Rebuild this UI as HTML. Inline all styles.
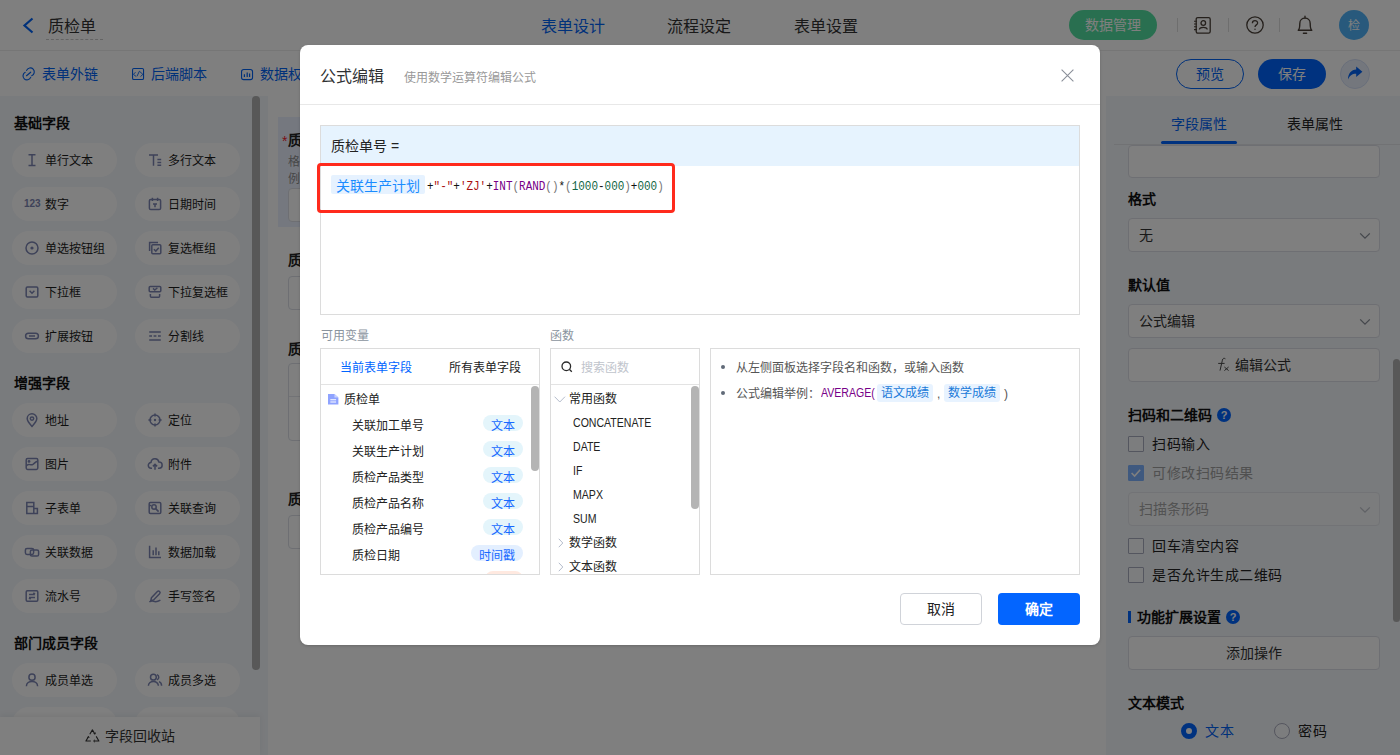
<!DOCTYPE html>
<html lang="zh-CN">
<head>
<meta charset="utf-8">
<title>质检单</title>
<style>
*{box-sizing:border-box;margin:0;padding:0}
html,body{width:1400px;height:755px;overflow:hidden;background:#fff}
body{font-family:"Liberation Sans",sans-serif;font-size:14px;color:#222;position:relative}
.abs{position:absolute}
.t{position:absolute;white-space:nowrap;line-height:20px;height:20px}
svg{display:block;overflow:visible}
/* ---------- header ---------- */
#hdr{position:absolute;left:0;top:0;width:1400px;height:51px;background:#fff;border-bottom:1px solid #ececec}
#bar2{position:absolute;left:0;top:51px;width:1400px;height:45px;background:#fff}
.blue{color:#0062f5}
/* ---------- left panel ---------- */
#left{position:absolute;left:0;top:96px;width:268px;height:659px;background:#f3f6fa;overflow:hidden}
.gh{position:absolute;left:14px;font-weight:bold;font-size:14px;line-height:20px;color:#111;white-space:nowrap}
.pill{position:absolute;width:105px;height:34px;border-radius:17px;background:#fff;font-size:12px;line-height:34px;color:#1c1c1c;white-space:nowrap}
.pill.c1{left:12px}.pill.c2{left:135px}
.pill span{position:absolute;left:33px;top:1px}
.pill svg{position:absolute;left:12px;top:9px;width:16px;height:16px;stroke:#7c85b2;fill:none;stroke-width:1.5}
#recycle{position:absolute;left:0;top:621px;width:260px;height:38px;background:#fff;box-shadow:0 -2px 6px rgba(0,0,0,.06)}
/* ---------- canvas ---------- */
#canvas{position:absolute;left:268px;top:96px;width:838px;height:659px;background:#fff;overflow:hidden}
.flabel{position:absolute;left:20px;font-weight:bold;font-size:14px;line-height:20px;color:#222;white-space:nowrap}
.finput{position:absolute;left:20px;width:790px;height:34px;border:1px solid #dcdfe6;border-radius:4px;background:#fff}
/* ---------- right panel ---------- */
#right{position:absolute;left:1106px;top:96px;width:294px;height:659px;background:#f3f6fa;overflow:hidden}
.rl{position:absolute;left:22px;font-weight:bold;font-size:14px;line-height:20px;color:#111;white-space:nowrap}
.rbox{position:absolute;left:22px;width:252px;height:34px;border:1px solid #dcdfe6;border-radius:4px;background:#fff;font-size:14px;line-height:32px;color:#333;white-space:nowrap}
.cb{position:absolute;left:22px;width:16px;height:16px;border:1px solid #a9acbe;border-radius:1px;background:#f9fafc}
.cbt{position:absolute;left:46px;font-size:14px;line-height:20px;color:#222;white-space:nowrap;letter-spacing:.5px}
/* ---------- overlay + modal ---------- */
#mask{position:absolute;left:0;top:0;width:1400px;height:755px;background:rgba(0,0,0,.5);z-index:10}
#modal{z-index:11;position:absolute;left:300px;top:45px;width:800px;height:600px;background:#fff;border-radius:8px;box-shadow:0 1px 3px rgba(0,0,0,.18);overflow:hidden}
#modal .t12{font-size:12px}
.box{position:absolute;border:1px solid #dcdcdc;background:#fff;overflow:hidden}
.row{position:absolute;left:0;margin-top:1px;font-size:12px;line-height:20px;height:20px;color:#222;white-space:nowrap}
.tag{position:absolute;height:16px;border-radius:8px;font-size:12px;line-height:22px;text-align:center;color:#155cff;background:#e8f6f6;white-space:nowrap}
.mono{font-family:"Liberation Mono",monospace;font-size:13px;color:#111;transform:scaleX(.8425);transform-origin:0 50%}
.mono i{font-style:normal}.mono .s{color:#aa1111}.mono .k{color:#770088}.mono .n{color:#116644}.mono .p{color:#777}
.lat{margin-top:0;transform:scaleX(.88);transform-origin:0 50%}
</style>
</head>
<body>

<!-- ================= HEADER ================= -->
<div id="hdr">
  <svg class="abs" style="left:22px;top:17px" width="12" height="17" viewBox="0 0 12 17"><path d="M10.5 1.5 L2.5 8.5 L10.5 15.5" fill="none" stroke="#0062f5" stroke-width="2.2" stroke-linejoin="miter"/></svg>
  <div class="t" style="left:48px;top:16.5px;font-size:16px;color:#333">质检单</div>
  <div class="abs" style="left:46px;top:39px;width:57px;height:0;border-top:1px dashed #c9c9c9"></div>

  <div class="t blue" style="left:541px;top:16.5px;font-size:16px">表单设计</div>
  <div class="t" style="left:667px;top:16.5px;font-size:16px;color:#333">流程设定</div>
  <div class="t" style="left:794px;top:16.5px;font-size:16px;color:#333">表单设置</div>

  <div class="abs" style="left:1069px;top:10px;width:88px;height:30px;border-radius:15px;background:#53dfa0;color:#fff;font-size:14px;line-height:30px;text-align:center;white-space:nowrap">数据管理</div>
  <div class="abs" style="left:1177px;top:18px;width:1px;height:14px;background:#dcdcdc"></div>
  <div class="abs" style="left:1228px;top:18px;width:1px;height:14px;background:#dcdcdc"></div>
  <div class="abs" style="left:1279px;top:18px;width:1px;height:14px;background:#dcdcdc"></div>
  <!-- contacts icon -->
  <svg class="abs" style="left:1193px;top:16px" width="19" height="19" viewBox="0 0 19 19" fill="none" stroke="#4a4038" stroke-width="1.3">
    <rect x="3.2" y="1.6" width="14" height="15.6" rx="1.6"/>
    <circle cx="10.3" cy="7" r="2.3"/>
    <path d="M6.4 13.6 C6.4 10.6 14.2 10.6 14.2 13.6"/>
    <path d="M1 5.2h3M1 8h3M1 10.8h3M1 13.6h3" stroke-width="1.1"/>
  </svg>
  <!-- help icon -->
  <svg class="abs" style="left:1246px;top:16px" width="18" height="18" viewBox="0 0 18 18" fill="none" stroke="#4a4038" stroke-width="1.3">
    <circle cx="9" cy="9" r="8.2"/>
    <path d="M6.4 7.2 C6.4 3.9 11.6 3.9 11.6 7 C11.6 9 9 8.8 9 11" />
    <circle cx="9" cy="13.3" r=".7" fill="#4a4038" stroke="none"/>
  </svg>
  <!-- bell icon -->
  <svg class="abs" style="left:1297px;top:15px" width="16" height="20" viewBox="0 0 16 20" fill="none" stroke="#4a4038" stroke-width="1.4">
    <path d="M1.2 15.2 H14.8 C13.2 14 13.2 12.6 13.2 8.4 C13.2 1.4 2.8 1.4 2.8 8.4 C2.8 12.6 2.8 14 1.2 15.2 Z" stroke-linejoin="round"/>
    <path d="M8 1.2v1.6M6.4 18.2h3.2" stroke-linecap="round"/>
  </svg>
  <div class="abs" style="left:1339px;top:10px;width:30px;height:30px;border-radius:15px;background:#50b3f8;color:#fff;font-size:12px;line-height:32px;text-align:center">检</div>
</div>

<!-- ================= TOOLBAR ================= -->
<div id="bar2">
  <svg class="abs" style="left:22px;top:16px" width="14" height="14" viewBox="0 0 14 14" fill="none" stroke="#0062f5" stroke-width="1.15" stroke-linecap="round">
    <path d="M4.600 3.400A4 4 0 1 1 9.700 8.700"/>
    <path d="M8.700 10.400A4 4 0 1 1 3.200 5.300"/>
    <path d="M4.500 8.700L8.700 5.200"/>
  </svg>
  <div class="t blue" style="left:42px;top:13px">表单外链</div>
  <svg class="abs" style="left:132px;top:17px" width="12.100" height="12.100" viewBox="0 0 12.100 12.100" fill="none" stroke="#0062f5" stroke-width="1.1" stroke-linejoin="round">
    <rect x=".55" y=".55" width="11" height="11" rx="1.3"/>
    <path d="M3.500 4.200L1.400 6.400L4.200 8.500M5 8.300L7.400 3.200L10.900 6.400L8.500 8.600" stroke-width=".9"/>
  </svg>
  <div class="t blue" style="left:151px;top:13px">后端脚本</div>
  <svg class="abs" style="left:241px;top:17.800px" width="12.100" height="11.200" viewBox="0 0 12.100 11.200" fill="none" stroke="#0062f5" stroke-width="1.1">
    <rect x=".55" y=".55" width="11" height="10.100" rx="2.200"/>
    <path d="M3.400 8V5.300M6.200 8V3.400M8.600 8V4.600" stroke-width="1.200"/>
  </svg>
  <div class="t blue" style="left:260px;top:13px">数据权限</div>

  <div class="abs blue" style="left:1176px;top:8px;width:68px;height:30px;border:1px solid #0062f5;border-radius:15px;font-size:14px;line-height:28px;text-align:center;white-space:nowrap">预览</div>
  <div class="abs" style="left:1258px;top:8px;width:68px;height:30px;border-radius:15px;background:#0065ff;color:#fff;font-size:14px;line-height:30px;text-align:center;white-space:nowrap">保存</div>
  <div class="abs" style="left:1340px;top:8px;width:30px;height:30px;border-radius:15px;background:#e9effb;border:1px solid #d3def5"></div>
  <svg class="abs" style="left:1347px;top:15px" width="16" height="15" viewBox="0 0 16 15"><path d="M9.2 0.6 L15.4 5.8 L9.2 11 V7.8 C5 7.8 2.6 9.6 1 13.6 C1 7.6 4.4 3.8 9.2 3.6 Z" fill="#0062f5"/></svg>
</div>

<!-- LEFT-PANEL -->
<div id="left">
  <div class="gh" style="top:17px">基础字段</div>
  <div class="pill c1" style="top:47px"><svg viewBox="0 0 16 16"><path d="M4.5 2.8h7M8 2.8v10.8M4.5 13.6h7"/></svg><span>单行文本</span></div>
  <div class="pill c2" style="top:47px"><svg viewBox="0 0 16 16"><path d="M2 3h9M6.5 3v10.8M10.4 7.6h3.8M10.4 10.4h3.8M10.4 13.2h3.8"/></svg><span>多行文本</span></div>
  <div class="pill c1" style="top:91px"><svg viewBox="0 0 16 16"><text x="0" y="11.300" font-family="Liberation Sans,sans-serif" font-size="10" font-weight="bold" stroke="none" fill="#7c85b2">123</text></svg><span>数字</span></div>
  <div class="pill c2" style="top:91px"><svg viewBox="0 0 16 16"><rect x="2.4" y="3.4" width="11.2" height="10.2" rx="1.4"/><path d="M5.4 1.8v3.2M10.6 1.8v3.2M6 8h4M8 8v3.2"/></svg><span>日期时间</span></div>
  <div class="pill c1" style="top:135px"><svg viewBox="0 0 16 16"><circle cx="8" cy="8" r="6"/><circle cx="8" cy="8" r="1.6" fill="#7c85b2" stroke="none"/></svg><span>单选按钮组</span></div>
  <div class="pill c2" style="top:135px"><svg viewBox="0 0 16 16"><path d="M2.6 11V2.6H11"/><rect x="4.8" y="4.8" width="9" height="9" rx="1"/><path d="M6.9 9.2l1.9 1.9 3-3.4"/></svg><span>复选框组</span></div>
  <div class="pill c1" style="top:179px"><svg viewBox="0 0 16 16"><rect x="2.2" y="3" width="11.6" height="10" rx="1.2"/><path d="M5.6 6.8l2.4 2.4 2.4-2.4"/></svg><span>下拉框</span></div>
  <div class="pill c2" style="top:179px"><svg viewBox="0 0 16 16"><rect x="2.2" y="2.6" width="11.6" height="5.2" rx="1"/><path d="M6 4.4l1.8 1.6 2.6-2.2"/><path d="M3.4 10v2.2a1 1 0 0 0 1 1h7.2a1 1 0 0 0 1-1V10"/></svg><span>下拉复选框</span></div>
  <div class="pill c1" style="top:223px"><svg viewBox="0 0 16 16"><rect x="1.6" y="5.2" width="12.8" height="5.6" rx="2.8"/><path d="M5 8h6"/></svg><span>扩展按钮</span></div>
  <div class="pill c2" style="top:223px"><svg viewBox="0 0 16 16"><path d="M2.2 4h11.6M2.2 8h2.8M6.6 8h2.8M11 8h2.8M2.2 12h11.6"/></svg><span>分割线</span></div>
  <div class="gh" style="top:277px">增强字段</div>
  <div class="pill c1" style="top:307px"><svg viewBox="0 0 16 16"><path d="M8 14.4C4.6 10.9 3.2 8.8 3.2 6.6a4.8 4.8 0 0 1 9.6 0c0 2.2-1.4 4.3-4.8 7.8z"/><circle cx="8" cy="6.6" r="1.7"/></svg><span>地址</span></div>
  <div class="pill c2" style="top:307px"><svg viewBox="0 0 16 16"><circle cx="8" cy="8" r="5"/><circle cx="8" cy="8" r="1.2" fill="#7c85b2" stroke="none"/><path d="M8 1.4v3M8 11.6v3M1.4 8h3M11.6 8h3"/></svg><span>定位</span></div>
  <div class="pill c1" style="top:351px"><svg viewBox="0 0 16 16"><rect x="2.2" y="2.6" width="11.6" height="10.8" rx="1.4"/><path d="M2.4 9.800C4.600 6.600 6.400 9.800 8.600 8.600S11.400 5.400 13.600 5.200"/><circle cx="5" cy="5.400" r=".7" fill="#7c85b2"/></svg><span>图片</span></div>
  <div class="pill c2" style="top:351px"><svg viewBox="0 0 16 16"><path d="M5 12.2H4.4a2.9 2.9 0 0 1-.4-5.8a4 4 0 0 1 7.9-.4a3.1 3.1 0 0 1 .3 6.2H11"/><path d="M8 13.8V8.4M5.9 10.4L8 8.3l2.1 2.1"/></svg><span>附件</span></div>
  <div class="pill c1" style="top:395px"><svg viewBox="0 0 16 16"><path d="M2.8 2.4h7v11.2h-7zM2.8 6.4h7M9.8 8.6h3.6v5H9.8"/></svg><span>子表单</span></div>
  <div class="pill c2" style="top:395px"><svg viewBox="0 0 16 16"><rect x="2.2" y="2.6" width="11.6" height="10.8" rx="1.2"/><circle cx="7" cy="7" r="2.2"/><path d="M8.6 8.6l3 3M2.2 5.6h2.2"/></svg><span>关联查询</span></div>
  <div class="pill c1" style="top:439px"><svg viewBox="0 0 16 16"><rect x="1.4" y="4.4" width="8.2" height="6" rx="1.6"/><rect x="6.4" y="6" width="8.2" height="6" rx="1.6"/></svg><span>关联数据</span></div>
  <div class="pill c2" style="top:439px"><svg viewBox="0 0 16 16"><path d="M2.6 1.8v11.8h11.4M6.2 11.2V6.2M9 11.2V3.6M11.8 11.2V7.2"/></svg><span>数据加载</span></div>
  <div class="pill c1" style="top:483px"><svg viewBox="0 0 16 16"><rect x="2.2" y="2.8" width="11.6" height="10.4" rx="1.2"/><path d="M5 6.4h6M5 9.6h6M9.4 4.8l1.6 1.6M6.6 11.2L5 9.6"/></svg><span>流水号</span></div>
  <div class="pill c2" style="top:483px"><svg viewBox="0 0 16 16"><path d="M4.4 9.8l6-6.2a1.5 1.5 0 0 1 2.2 2.1l-6 6.2-2.8.8z"/><path d="M2.4 14c2.2-1.8 3.8-.6 5.4-.4s3.400-.2 5.6-1.400"/></svg><span>手写签名</span></div>
  <div class="gh" style="top:537px">部门成员字段</div>
  <div class="pill c1" style="top:567px"><svg viewBox="0 0 16 16"><circle cx="8" cy="5.2" r="3.1"/><path d="M2.4 14.2c0-6.4 11.2-6.4 11.2 0"/></svg><span>成员单选</span></div>
  <div class="pill c2" style="top:567px"><svg viewBox="0 0 16 16"><circle cx="6.4" cy="5.2" r="2.9"/><path d="M1.4 13.8c0-5.8 10-5.8 10 0"/><path d="M10 2.6a2.8 2.8 0 0 1 0 5.2M12 9.6c1.6.6 2.6 2 2.6 4.2"/></svg><span>成员多选</span></div>
  <div class="pill c1" style="top:611px"><svg viewBox="0 0 16 16"><rect x="2.4" y="2.6" width="11.2" height="10.8" rx="1"/></svg><span>部门单选</span></div>
  <div class="pill c2" style="top:611px"><svg viewBox="0 0 16 16"><rect x="2.4" y="2.6" width="11.2" height="10.8" rx="1"/></svg><span>部门多选</span></div>
  <div class="abs" style="left:252px;top:0;width:8px;height:574px;border-radius:4px;background:#b0b0b0"></div>
  <div id="recycle">
    <svg class="abs" style="left:84.500px;top:11.500px" width="15" height="14" viewBox="0 0 15 14" fill="none" stroke="#333" stroke-width="1.1" stroke-linejoin="round"><path d="M4.800 5.200L7.400 .9l2.500 4.100M11.200 7.400l2.700 4.600H8.800M5.800 12H.9l2.600-4.400"/><path d="M8.600 4.400l1.500.8.300-1.700M9.900 10.800l-1.300 1.200 1.300 1.200M2.300 8.500l1.300-1.100.5 1.600" stroke-width=".9"/></svg>
    <div class="t" style="left:105px;top:9px;font-size:14px;color:#333">字段回收站</div>
  </div>
</div>
<!-- /LEFT-PANEL -->
<!-- CANVAS -->
<div id="canvas">
  <div class="abs" style="left:10px;top:21px;width:818px;height:110px;background:#ebf1ff"></div>
  <div class="flabel" style="top:34px"><span style="position:absolute;left:-6px;top:1px;color:#f5222d;font-weight:normal">*</span>质检单号</div>
  <div class="t" style="left:20px;top:58px;font-size:12px;line-height:17px;height:17px;color:#8f8f8f">格式：关联生产计划-ZJ+三位随机数</div>
  <div class="t" style="left:20px;top:75px;font-size:12px;line-height:17px;height:17px;color:#8f8f8f">例如：SC20230410001-ZJ123</div>
  <div class="finput" style="top:92px"></div>
  <div class="flabel" style="top:154px">质检产品类型</div>
  <div class="finput" style="top:180px"></div>
  <div class="flabel" style="top:243px">质检产品明细</div>
  <div class="finput" style="top:267px;height:78px"></div>
  <div class="abs" style="left:21px;top:300px;width:788px;height:1px;background:#e4e7ed"></div>
  <div class="flabel" style="top:393px">质检日期</div>
  <div class="finput" style="top:419px"></div>
</div>
<!-- /CANVAS -->
<!-- RIGHT-PANEL -->
<div id="right">
  <div class="abs" style="left:0;top:0;width:294px;height:49px;background:#f3f6fa;z-index:2">
    <div class="abs" style="left:8px;top:48px;width:286px;height:1px;background:#e2e4e8"></div>
    <div class="t blue" style="left:65px;top:18px">字段属性</div>
    <div class="t" style="left:181px;top:18px;color:#222">表单属性</div>
    <div class="abs" style="left:55px;top:45px;width:76px;height:3px;border-radius:1.5px;background:#0065ff"></div>
  </div>
  <div class="rbox" style="top:49px;height:33px"></div>
  <div class="rl" style="top:93px">格式</div>
  <div class="rbox" style="top:122px;padding-left:10px">无<svg class="abs" style="left:230px;top:13px" width="12" height="8" viewBox="0 0 12 8" fill="none" stroke="#8a8f99" stroke-width="1.3"><path d="M1.2 1.4L6 6.2l4.8-4.8"/></svg></div>
  <div class="rl" style="top:179px">默认值</div>
  <div class="rbox" style="top:208px;padding-left:10px">公式编辑<svg class="abs" style="left:230px;top:13px" width="12" height="8" viewBox="0 0 12 8" fill="none" stroke="#8a8f99" stroke-width="1.3"><path d="M1.2 1.4L6 6.2l4.8-4.8"/></svg></div>
  <div class="rbox" style="top:252px;text-align:center;padding-left:18px"><svg class="abs" style="left:88px;top:8px" width="12" height="15" viewBox="0 0 12 15" fill="none" stroke="#4a4a4a" stroke-width="1"><path d="M8.400 1.800C7 .800 5.700 1.300 5.400 3.200L3 13.600M1.200 6.400H7.600M7.400 10L11.600 13.600M11.600 10L7.400 13.600"/></svg>编辑公式</div>
  <div class="rl" style="top:309px">扫码和二维码</div>
  <div class="abs" style="left:111px;top:312px;width:14px;height:14px;border-radius:7px;background:#0065ff;color:#fff;font-size:11px;font-weight:bold;line-height:14px;text-align:center">?</div>
  <div class="cb" style="top:340px"></div><div class="cbt" style="top:338px">扫码输入</div>
  <div class="cb" style="top:369px;background:#7fb2ff;border-color:#7fb2ff"><svg class="abs" style="left:1px;top:2px" width="12" height="10" viewBox="0 0 12 10" fill="none" stroke="#fff" stroke-width="1.6"><path d="M1.6 5l3 3 5.6-6.2"/></svg></div><div class="cbt" style="top:367px;color:#a0a0a0">可修改扫码结果</div>
  <div class="rbox" style="top:396px;padding-left:10px;color:#a6a6a6;background:#f7f8fa;border-color:#e4e7ed">扫描条形码<svg class="abs" style="left:230px;top:13px" width="12" height="8" viewBox="0 0 12 8" fill="none" stroke="#c0c4cc" stroke-width="1.3"><path d="M1.2 1.4L6 6.2l4.8-4.8"/></svg></div>
  <div class="cb" style="top:442px"></div><div class="cbt" style="top:440px">回车清空内容</div>
  <div class="cb" style="top:471px"></div><div class="cbt" style="top:469px">是否允许生成二维码</div>
  <div class="abs" style="left:22px;top:515px;width:3px;height:12px;background:#0065ff"></div>
  <div class="rl" style="left:31px;top:511px">功能扩展设置</div>
  <div class="abs" style="left:120px;top:514px;width:14px;height:14px;border-radius:7px;background:#0065ff;color:#fff;font-size:11px;font-weight:bold;line-height:14px;text-align:center">?</div>
  <div class="rbox" style="top:540px;text-align:center">添加操作</div>
  <div class="rl" style="top:597px">文本模式</div>
  <div class="abs" style="left:75px;top:627px;width:16px;height:16px;border-radius:8px;border:5px solid #0065ff;background:#fff"></div>
  <div class="t blue" style="left:99px;top:625px;letter-spacing:.5px">文本</div>
  <div class="abs" style="left:168px;top:627px;width:16px;height:16px;border-radius:8px;border:1px solid #a9acbe;background:#f9fafc"></div>
  <div class="t" style="left:192px;top:625px;color:#222;letter-spacing:.5px">密码</div>
  <div class="abs" style="left:287px;top:263px;width:7px;height:263px;border-radius:3.5px;background:#b0b0b0"></div>
</div>
<!-- /RIGHT-PANEL -->

<div id="mask"></div>

<!-- MODAL -->
<div id="modal">
  <div class="t" style="left:20px;top:22px;font-size:16px;color:#303133">公式编辑</div>
  <div class="t" style="left:104px;top:23px;font-size:12px;color:#999">使用数学运算符编辑公式</div>
  <svg class="abs" style="left:761px;top:24px" width="13" height="13" viewBox="0 0 13 13" fill="none" stroke="#8a8f99" stroke-width="1.1"><path d="M.6.6l11.8 11.8M12.4.6L.6 12.4"/></svg>
  <div class="abs" style="left:0;top:59px;width:800px;height:1px;background:#e8e8e8"></div>
  <div class="box" style="left:20px;top:80px;width:760px;height:190px">
    <div class="abs" style="left:0;top:0;width:758px;height:40px;background:#e6f3fe"></div>
    <div class="t" style="left:10px;top:10px;font-size:14px;color:#222">质检单号 =</div>
    <div class="abs" style="left:10px;top:49px;width:94px;height:19px;border-radius:2px;background:#e6f2ff;color:#1a8cff;font-size:14px;line-height:22px;text-align:center;white-space:nowrap">关联生产计划</div>
    <div class="t mono" style="left:106px;top:51px">+<i class="s">"-"</i>+<i class="s">'ZJ'</i>+<i class="k">INT</i><i class="p">(</i><i class="k">RAND</i><i class="p">()</i>*<i class="p">(</i><i class="n">1000</i>-<i class="n">000</i><i class="p">)</i>+<i class="n">000</i><i class="p">)</i></div>
  </div>
  <div class="abs" style="left:17px;top:118px;width:358px;height:50px;border:3px solid #ff2a1c;border-radius:4px"></div>
  <div class="t" style="left:21px;top:280.5px;font-size:12px;color:#8a949e">可用变量</div>
  <div class="t" style="left:250px;top:280.5px;font-size:12px;color:#8a949e">函数</div>
  <div class="box" style="left:20px;top:303px;width:220px;height:227px">
    <div class="abs" style="left:0;top:0;width:218px;height:36px;border-bottom:1px solid #e3e3e3"></div>
    <div class="row" style="left:19px;top:8px;color:#0065ff">当前表单字段</div>
    <div class="row" style="left:128px;top:8px">所有表单字段</div>
    <svg class="abs" style="left:7px;top:44.500px" width="10.400" height="10.500" viewBox="0 0 9 10" preserveAspectRatio="none"><path d="M0 0h5.6L9 3.4V10H0z" fill="#8fa3ff"/><path d="M5.6 0v3.4H9z" fill="#c8d2ff"/><path d="M2 5.4h5M2 7.6h5" stroke="#fff" stroke-width="1"/></svg>
    <div class="row" style="left:23px;top:40px">质检单</div>
    <div class="row" style="left:31px;top:66px">关联加工单号</div>
    <div class="tag" style="left:162px;top:66px;width:40px;background:#e4f5fb;color:#1769ff">文本</div>
    <div class="row" style="left:31px;top:92px">关联生产计划</div>
    <div class="tag" style="left:162px;top:92px;width:40px;background:#e4f5fb;color:#1769ff">文本</div>
    <div class="row" style="left:31px;top:118px">质检产品类型</div>
    <div class="tag" style="left:162px;top:118px;width:40px;background:#e4f5fb;color:#1769ff">文本</div>
    <div class="row" style="left:31px;top:144px">质检产品名称</div>
    <div class="tag" style="left:162px;top:144px;width:40px;background:#e4f5fb;color:#1769ff">文本</div>
    <div class="row" style="left:31px;top:170px">质检产品编号</div>
    <div class="tag" style="left:162px;top:170px;width:40px;background:#e4f5fb;color:#1769ff">文本</div>
    <div class="row" style="left:31px;top:196px">质检日期</div>
    <div class="tag" style="left:150px;top:196px;width:52px;background:#e3efff;color:#1769ff">时间戳</div>
    <div class="row" style="left:31px;top:222px">质检结果</div>
    <div class="tag" style="left:164px;top:222px;width:38px;background:#ffe9e0;color:#ff6a3d">单选</div>
    <div class="abs" style="left:210px;top:37px;width:8px;height:85px;border-radius:4px;background:#b4b4b4"></div>
  </div>
  <div class="box" style="left:250px;top:303px;width:150px;height:227px">
    <div class="abs" style="left:0;top:0;width:148px;height:36px;border-bottom:1px solid #e3e3e3"></div>
    <svg class="abs" style="left:10px;top:12px" width="12" height="12" viewBox="0 0 12 12" fill="none" stroke="#2a2a2a" stroke-width="1.300"><circle cx="5.300" cy="5.300" r="4.300"/><path d="M8.500 8.500l2.300 2.300"/></svg>
    <div class="row" style="left:30px;top:8px;color:#c0c4cc">搜索函数</div>
    <svg class="abs" style="left:3px;top:46.500px" width="12" height="7" viewBox="0 0 12 7" fill="none" stroke="#b4bccc" stroke-width="1"><path d="M.6.700l5.200 5.300 5.200-5.300"/></svg>
    <div class="row" style="left:18px;top:40px;margin-top:0">常用函数</div>
    <div class="row lat" style="left:22px;top:64px">CONCATENATE</div>
    <div class="row lat" style="left:22px;top:88px">DATE</div>
    <div class="row lat" style="left:22px;top:112px">IF</div>
    <div class="row lat" style="left:22px;top:136px">MAPX</div>
    <div class="row lat" style="left:22px;top:160px">SUM</div>
    <svg class="abs" style="left:7px;top:189px" width="6" height="10" viewBox="0 0 6 10" fill="none" stroke="#b4bccc" stroke-width="1"><path d="M.8.8l4 4.2-4 4.2"/></svg>
    <div class="row" style="left:18px;top:184px;margin-top:0">数学函数</div>
    <svg class="abs" style="left:7px;top:213px" width="6" height="10" viewBox="0 0 6 10" fill="none" stroke="#b4bccc" stroke-width="1"><path d="M.8.8l4 4.2-4 4.2"/></svg>
    <div class="row" style="left:18px;top:208px;margin-top:0">文本函数</div>
    <div class="abs" style="left:140px;top:37px;width:8px;height:123px;border-radius:4px;background:#b4b4b4"></div>
  </div>
  <div class="box" style="left:410px;top:303px;width:370px;height:227px">
    <div class="abs" style="left:10px;top:16px;width:4px;height:4px;border-radius:2px;background:#606a78"></div>
    <div class="row" style="left:25px;top:8px;color:#555">从左侧面板选择字段名和函数，或输入函数</div>
    <div class="abs" style="left:10px;top:42px;width:4px;height:4px;border-radius:2px;background:#606a78"></div>
    <div class="row" style="left:25px;top:34px;color:#555">公式编辑举例：</div>
    <div class="row lat" style="left:109.5px;top:34px;color:#770088">AVERAGE(</div>
    <div class="abs" style="left:166px;top:35px;width:56px;height:18px;border-radius:3px;background:#e8f3ff;color:#1a7ad9;font-size:12px;line-height:18px;text-align:center;white-space:nowrap">语文成绩</div>
    <div class="row" style="left:226px;top:34px;color:#555">,</div>
    <div class="abs" style="left:233px;top:35px;width:56px;height:18px;border-radius:3px;background:#e8f3ff;color:#1a7ad9;font-size:12px;line-height:18px;text-align:center;white-space:nowrap">数学成绩</div>
    <div class="row" style="left:293px;top:34px;color:#555">)</div>
  </div>
  <div class="abs" style="left:600px;top:548px;width:82px;height:32px;border:1px solid #d0d3d9;border-radius:4px;background:#fff;color:#222;font-size:14px;line-height:30px;text-align:center;white-space:nowrap">取消</div>
  <div class="abs" style="left:698px;top:548px;width:82px;height:32px;border-radius:4px;background:#0365ff;color:#fff;font-size:14px;font-weight:bold;line-height:32px;text-align:center;white-space:nowrap">确定</div>
</div>
<!-- /MODAL -->

</body>
</html>
